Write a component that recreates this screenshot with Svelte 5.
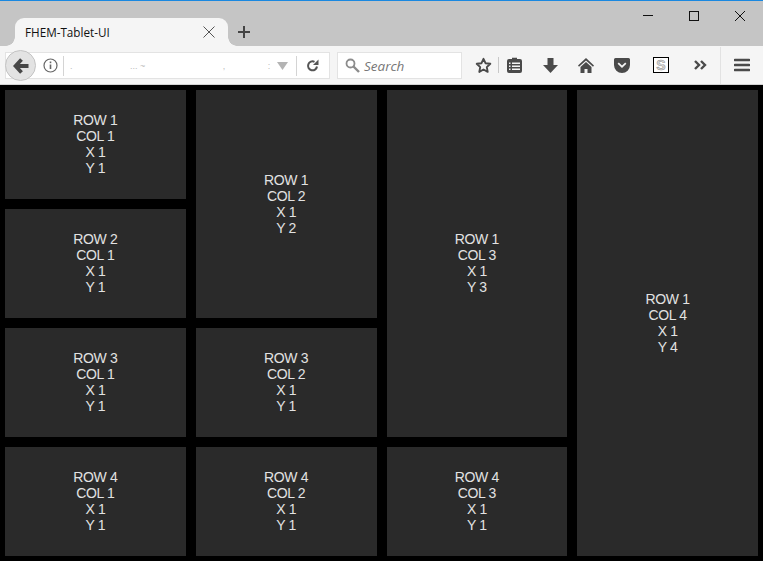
<script>
  const cells = [
    { r: 1, c: 1, x: 1, y: 1 }, { r: 1, c: 2, x: 1, y: 2 }, { r: 1, c: 3, x: 1, y: 3 }, { r: 1, c: 4, x: 1, y: 4 },
    { r: 2, c: 1, x: 1, y: 1 },
    { r: 3, c: 1, x: 1, y: 1 }, { r: 3, c: 2, x: 1, y: 1 },
    { r: 4, c: 1, x: 1, y: 1 }, { r: 4, c: 2, x: 1, y: 1 }, { r: 4, c: 3, x: 1, y: 1 }
  ];
</script>

<div class="window">
  <header class="tabstrip">
    <div class="tab">
      <span class="tabtitle">FHEM-Tablet-UI</span>
      <svg class="tabclose" width="12" height="12" viewBox="0 0 12 12"><path d="M.5.5l11 11M11.5.5l-11 11" stroke="#555" fill="none"/></svg>
    </div>
    <svg class="newtab" width="14" height="14" viewBox="0 0 14 14"><path d="M7 1v12M1 7h12" stroke="#444" stroke-width="2" fill="none"/></svg>
    <div class="winctl">
      <svg width="12" height="12" viewBox="0 0 12 12"><path d="M1 5.500h10" stroke="#111" fill="none"/></svg>
      <svg width="12" height="12" viewBox="0 0 12 12"><rect x="1.500" y="1.500" width="9" height="9" stroke="#111" fill="none"/></svg>
      <svg width="12" height="12" viewBox="0 0 12 12"><path d="M1 1l10 10M11 1L1 11" stroke="#111" fill="none"/></svg>
    </div>
  </header>

  <nav class="toolbar">
    <div class="urlbar">
      <div class="back">
        <svg width="16" height="16" viewBox="0 0 16 16"><path d="M8.500 1.500L2.500 8l6 6.500M3 8H15.500" stroke="#474747" stroke-width="3.800" fill="none"/></svg>
      </div>
      <svg class="info" width="15" height="15" viewBox="0 0 15 15"><circle cx="7.500" cy="7.500" r="6.500" stroke="#666" stroke-width="1.200" fill="none"/><path d="M7.500 6.500v4.500" stroke="#666" stroke-width="1.600"/><path d="M7.500 3.500v1.700" stroke="#666" stroke-width="1.600"/></svg>
      <span class="sep"></span>
      <span class="url">.&nbsp;&nbsp;&nbsp;&nbsp;&nbsp;&nbsp;&nbsp;&nbsp;&nbsp;&nbsp;&nbsp;&nbsp;&nbsp;&nbsp;&nbsp;&nbsp;&nbsp;&nbsp;&nbsp;&nbsp;&nbsp;&nbsp;&nbsp;... ~&nbsp;&nbsp;&nbsp;&nbsp;&nbsp;&nbsp;&nbsp;&nbsp;&nbsp;&nbsp;&nbsp;&nbsp;&nbsp;&nbsp;&nbsp;&nbsp;&nbsp;&nbsp;&nbsp;&nbsp;&nbsp;&nbsp;&nbsp;&nbsp;&nbsp;&nbsp;&nbsp;&nbsp;&nbsp;&nbsp;&nbsp;,&nbsp;&nbsp;&nbsp;&nbsp;&nbsp;&nbsp;&nbsp;&nbsp;&nbsp;&nbsp;&nbsp;&nbsp;&nbsp;&nbsp;&nbsp;&nbsp;&nbsp;:</span>
      <svg class="drop" width="11" height="8" viewBox="0 0 11 8"><path d="M0 0h11L5.500 8z" fill="#b4b4b4"/></svg>
      <span class="sep sep2"></span>
      <svg class="reload" width="13" height="13" viewBox="0 0 13 13"><path d="M11 7.500A4.500 4.500 0 1 1 8.500 2.800" stroke="#555" stroke-width="2" fill="none"/><path d="M12.500 0.500v5.500h-5.500z" fill="#555"/></svg>
    </div>

    <div class="search">
      <svg width="15" height="15" viewBox="0 0 15 15"><circle cx="5.500" cy="5.500" r="4" stroke="#8c8c8c" stroke-width="1.800" fill="none"/><path d="M8.500 8.500l5.500 5.500" stroke="#8c8c8c" stroke-width="2.400"/></svg>
      <span>Search</span>
    </div>

    <div class="tools">
      <svg class="star" width="17" height="17" viewBox="0 0 17 17"><path d="M8.500 1.800l2 4.400 4.800.6-3.500 3.300.9 4.800-4.200-2.400-4.200 2.400.9-4.800L1.700 6.800l4.800-.6z" stroke="#4a4a4a" stroke-width="1.900" fill="none" stroke-linejoin="round"/></svg>
      <span class="sep sep3"></span>
      <svg class="clip" width="15" height="16" viewBox="0 0 15 16"><path fill-rule="evenodd" fill="#4a4a4a" d="M5 2V.8h5V2h3a2 2 0 0 1 2 2v10a2 2 0 0 1-2 2H2a2 2 0 0 1-2-2V4a2 2 0 0 1 2-2zM2 5.500V7h1.500V5.500zM5 5.500V7h8V5.500zM2 8.500V10h1.500V8.500zM5 8.500V10h8V8.500zM2 11.500V13h1.500v-1.500zM5 11.500V13h8v-1.500z"/></svg>
      <svg class="down" width="15" height="15" viewBox="0 0 15 15"><path fill="#4a4a4a" d="M4.500 0h6v7H15l-7.500 8L0 7h4.500z"/></svg>
      <svg class="home" width="16" height="15" viewBox="0 0 16 15"><path fill="#4a4a4a" d="M8 0l8 7.500-1 1.200L8 2.500 1 8.700 0 7.500zM8 4l5.500 5v6H9.500v-4h-3v4H2.500V9z"/></svg>
      <svg class="pocket" width="16" height="15" viewBox="0 0 16 15"><path fill-rule="evenodd" fill="#4a4a4a" d="M1.500 0h13A1.500 1.500 0 0 1 16 1.500V7a8 8 0 0 1-16 0V1.500A1.500 1.500 0 0 1 1.500 0zM4.800 4.500L3.600 5.800 8 10l4.400-4.200-1.200-1.300L8 7.500z"/></svg>
      <span class="sbox">S</span>
      <svg class="more" width="13" height="10" viewBox="0 0 13 10"><path d="M1 1l4 4-4 4M7 1l4 4-4 4" stroke="#4a4a4a" stroke-width="2.400" fill="none"/></svg>
      <span class="sep sep4"></span>
      <svg class="menu" width="16" height="14" viewBox="0 0 16 14"><path d="M1 2h14M1 7h14M1 12h14" stroke="#4a4a4a" stroke-width="2.600" stroke-linecap="round" fill="none"/></svg>
    </div>
  </nav>

  <main class="grid">
    {#each cells as cell}
      <div class="cell" class:y2={cell.y === 2} class:y3={cell.y === 3} class:y4={cell.y === 4} style="grid-row-start:{cell.r};grid-column-start:{cell.c}">
        <div>ROW {cell.r}</div>
        <div>COL {cell.c}</div>
        <div>X {cell.x}</div>
        <div>Y {cell.y}</div>
      </div>
    {/each}
  </main>
</div>

<style>
  :global(body) { margin: 0; background: #000; }
  .window { width: 763px; height: 561px; display: flex; flex-direction: column; overflow: hidden; font-family: "Liberation Sans", Arial, sans-serif; }

  .tabstrip { height: 45px; flex: none; display: flex; align-items: flex-end; background: #c5c5c5; border-top: 1px solid #1a88e0; position: relative; }
  .tab { width: 213px; height: 28px; margin-left: 15px; padding: 0 13px 0 10px; box-sizing: border-box; display: flex; align-items: center; justify-content: space-between; background: #f5f5f5; border-radius: 9px 9px 0 0; position: relative; }
  .tab::before, .tab::after { content: ""; position: absolute; bottom: 0; width: 9px; height: 9px; }
  .tab::before { left: -9px; background: radial-gradient(circle at 0 0, transparent 8.500px, #f5f5f5 9px); }
  .tab::after { right: -9px; background: radial-gradient(circle at 100% 0, transparent 8.500px, #f5f5f5 9px); }
  .tabtitle { font: 11.700px "Open Sans", sans-serif; color: #111; }
  .newtab { margin: 0 0 7px 9px; }
  .winctl { position: absolute; top: 9px; right: 17px; display: flex; gap: 34px; }

  .toolbar { height: 38px; flex: none; display: flex; align-items: center; background: #f5f5f5; border-bottom: 1px solid #d2d2d2; padding-left: 5px; position: relative; }
  .urlbar { width: 325px; height: 27px; margin-top: 1px; box-sizing: border-box; display: flex; align-items: center; background: #fff; border: 1px solid #e3e3e3; position: relative; }
  .back { position: absolute; left: -1px; top: -3px; width: 31px; height: 31px; box-sizing: border-box; border: 1px solid #c4c4c4; border-radius: 50%; background: #e3e3e3; display: flex; align-items: center; justify-content: center; }
  .info { margin-left: 37px; }
  .sep { width: 1px; height: 20px; background: #d4d4d4; flex: none; }
  .urlbar > .sep { margin-left: 5px; }
  .url { margin-left: 6px; font-size: 9px; color: #bbb; white-space: nowrap; width: 208px; overflow: hidden; }
  .drop { margin-left: -1px; }
  .urlbar > .sep2 { margin-left: 8px; }
  .reload { margin-left: 9px; }

  .search { width: 125px; height: 27px; margin: 1px 0 0 7px; padding-left: 7px; box-sizing: border-box; display: flex; align-items: center; gap: 4px; background: #fff; border: 1px solid #e3e3e3; }
  .search span { font: italic 13.500px "Open Sans", sans-serif; color: #777; }

  .tools { flex: 1; height: 100%; display: flex; align-items: center; }
  .star { margin-left: 13px; }
  .sep3 { height: 16px; margin-left: 6px; background: #c8c8c8; }
  .clip { margin-left: 8px; }
  .down { margin-left: 21px; }
  .home { margin-left: 20px; }
  .pocket { margin-left: 20px; }
  .sbox { width: 14px; height: 14px; margin-left: 23px; border: 1px solid #000; background: #fff; color: #ddd; font: bold 14px/14px "Liberation Sans", sans-serif; text-align: center; -webkit-text-stroke: 0.5px #888; }
  .more { margin-left: 25px; }
  .sep4 { height: 37px; margin-left: 13px; background: #e2e2e2; }
  .menu { margin-left: 13px; }

  .grid { flex: 1; box-sizing: border-box; padding: 5px; display: grid; grid-template-columns: repeat(4, 1fr); grid-template-rows: repeat(4, 1fr); gap: 10px; background: #000; min-height: 0; }
  .cell { background: #2a2a2a; color: #e2e2e2; font-size: 14px; letter-spacing: -0.350px; line-height: 16px; padding-bottom: 1px; display: flex; flex-direction: column; align-items: center; justify-content: center; }
  .y2 { grid-row-end: span 2; }
  .y3 { grid-row-end: span 3; }
  .y4 { grid-row-end: span 4; }
</style>
